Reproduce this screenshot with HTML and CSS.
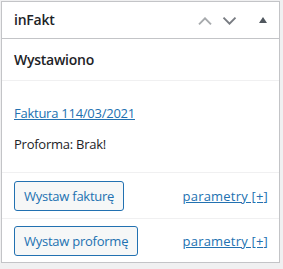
FILE: index.html
```html
<!DOCTYPE html>
<html>
<head>
<meta charset="utf-8">
<link rel="stylesheet" href="styles.css">
</head>
<body>
<div class="postbox">
  <div class="postbox-header">
    <h2 class="hndle">inFakt</h2>
    <div class="handle-actions">
      <span class="handle-btn up">
        <svg width="14" height="8" viewBox="0 0 14 8"><path d="M1 7.3 L7 1.3 L13 7.3" fill="none" stroke="currentColor" stroke-width="1.9"/></svg>
      </span>
      <span class="handle-btn down">
        <svg width="15" height="8" viewBox="0 0 15 8"><path d="M1.5 0.7 L7.5 6.7 L13.5 0.7" fill="none" stroke="currentColor" stroke-width="1.9"/></svg>
      </span>
      <span class="handle-btn toggle">
        <svg width="8" height="6" viewBox="0 0 8 6"><path d="M0 6 L4 0 L8 6 Z" fill="currentColor"/></svg>
      </span>
    </div>
  </div>
  <div class="section title-section">
    <h3 class="sub">Wystawiono</h3>
  </div>
  <div class="section info">
    <p><a href="#" class="link">Faktura 114/03/2021</a></p>
    <p>Proforma: Brak!</p>
  </div>
  <div class="row">
    <span class="button">Wystaw fakturę</span>
    <a href="#" class="link params">parametry [+]</a>
  </div>
  <div class="row last">
    <span class="button">Wystaw proformę</span>
    <a href="#" class="link params">parametry [+]</a>
  </div>
</div>
</body>
</html>
```
FILE: styles.css
```css
html, body {
  margin: 0;
  padding: 0;
}
body {
  background: #f0f0f1;
  font-family: "Open Sans", "Noto Sans", sans-serif;
  font-size: 13px;
  letter-spacing: -0.25px;
  color: #1d2327;
  width: 283px;
  height: 269px;
  padding: 1px 0 0 1px;
  box-sizing: border-box;
}
.postbox {
  width: 279px;
  height: 262px;
  background: #fff;
  border: 1px solid #c3c4c7;
  box-sizing: border-box;
  overflow: hidden;
}
.postbox-header {
  display: flex;
  align-items: center;
  justify-content: space-between;
  height: 36px;
  border-bottom: 1px solid #c3c4c7;
}
.hndle {
  margin: 0;
  padding: 0 12px;
  font-size: 14px;
  font-weight: 600;
  line-height: 1;
}
.handle-actions {
  display: flex;
  align-items: center;
  padding-right: 12px;
  padding-top: 1px;
}
.handle-btn {
  display: flex;
  color: #787c82;
}
.handle-btn.up {
  color: #a7aaad;
}
.handle-btn.down {
  margin-left: 10px;
}
.handle-btn.toggle {
  margin-left: 22px;
  color: #50575e;
  padding-bottom: 1px;
}
.section {
  padding: 0 12px;
  border-bottom: 1px solid #f0f0f1;
}
.title-section {
  height: 41px;
  display: flex;
  align-items: center;
}
.sub {
  margin: 0;
  font-size: 14px;
  font-weight: 600;
}
.info {
  height: 92px;
  padding-top: 23px;
  box-sizing: border-box;
}
.info p {
  margin: 0 0 13px;
  line-height: 18px;
}
.link {
  color: #2271b1;
  text-decoration: underline;
}
.row {
  display: flex;
  align-items: center;
  justify-content: space-between;
  padding: 0 11px 0 12px;
  height: 45px;
  border-bottom: 1px solid #f0f0f1;
}
.row.last {
  height: 44px;
  border-bottom: none;
}
.button {
  display: inline-flex;
  align-items: center;
  height: 30px;
  box-sizing: border-box;
  padding: 0 9px;
  border: 1px solid #2271b1;
  border-radius: 3px;
  background: #f6f7f7;
  color: #2271b1;
  font-size: 13px;
}
.params {
  font-size: 13px;
  letter-spacing: 0.2px;
}
```
